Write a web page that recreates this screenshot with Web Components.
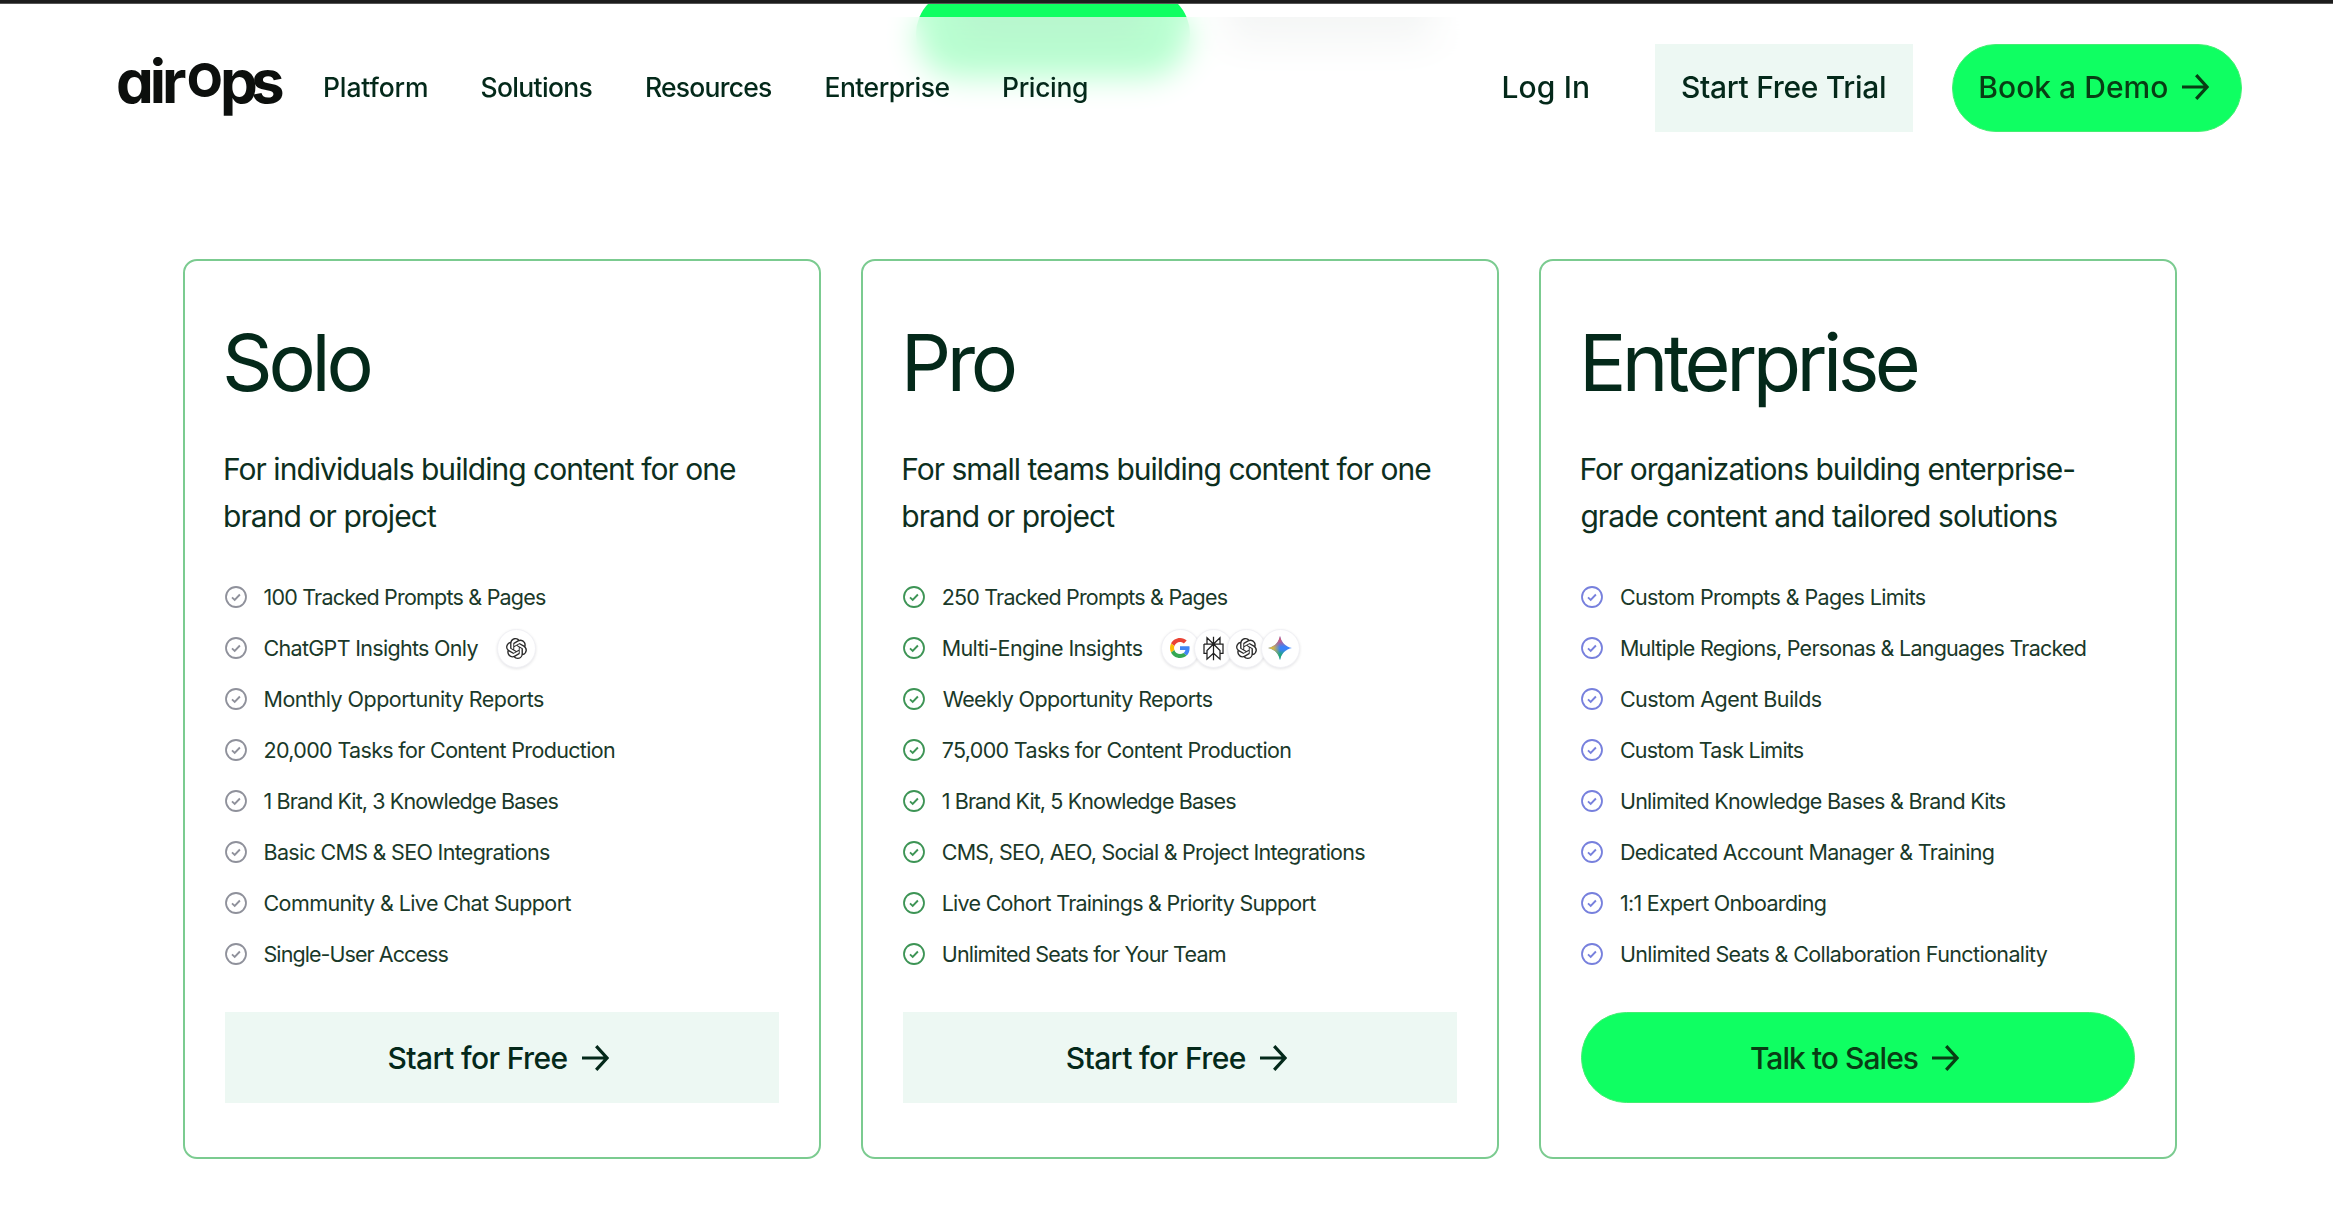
<!DOCTYPE html>
<html lang="en">
<head>
<meta charset="utf-8">
<title>airOps Pricing</title>
<style>
html,body{margin:0;height:1224px;overflow:hidden;background:#fff}
body{font-family:Inter,"Liberation Sans",sans-serif;color:#04291a}
</style>
</head>
<body>
<pricing-page></pricing-page>
<script>
const define=(name,html,init)=>customElements.define(name,class extends HTMLElement{
  constructor(){super();this.attachShadow({mode:'open'})}
  connectedCallback(){
    if(this.ready)return;this.ready=true;
    this.shadowRoot.innerHTML=typeof html==='function'?html(this):html;
    if(init)init(this);
  }
});
const ctx=document.createElement('canvas').getContext('2d');

/* Text set to a fixed ink width through its letter spacing. */
define('fit-text','<style>:host{display:block;white-space:nowrap;flex:none}span{display:inline-block;text-indent:0}</style><span><slot></slot></span>',el=>{
  const w=+el.getAttribute('w'),t=el.textContent,cs=getComputedStyle(el);
  ctx.font=`${cs.fontWeight} ${cs.fontSize} ${cs.fontFamily}`;
  const m=ctx.measureText(t),lsb=-m.actualBoundingBoxLeft,rsb=m.width-m.actualBoundingBoxRight;
  const span=el.shadowRoot.querySelector('span');
  const adv=span.getBoundingClientRect().width;
  if(t.length>1)span.style.letterSpacing=((w-(adv-lsb-rsb))/(t.length-1)).toFixed(3)+'px';
  span.style.marginLeft=(-lsb).toFixed(2)+'px';
  el.style.width=w+'px';
});

define('arrow-icon',`<style>:host{display:block;flex:none;width:27px;height:26px}svg{display:block}</style>
<svg width="27" height="26" viewBox="0 0 27 26" fill="none" stroke="currentColor" stroke-width="3.2"><path d="M0 13H25M14.2 1.2L25 13L14.2 24.8"/></svg>`);

define('check-icon',`<style>:host{display:block;flex:none;width:22px;height:22px}svg{display:block}</style>
<svg width="22" height="22" viewBox="0 0 22 22" fill="none" stroke="currentColor" stroke-width="1.8"><circle cx="11" cy="11" r="10"/><path d="M7 11.4l2.7 2.5 5.2-5.4" stroke-width="1.9"/></svg>`);

const glyphs={
openai:`<svg width="21" height="21" viewBox="0 0 24 24" fill="#2b2b2b"><path d="M22.2819 9.8211a5.9847 5.9847 0 0 0-.5157-4.9108 6.0462 6.0462 0 0 0-6.5098-2.9A6.0651 6.0651 0 0 0 4.9807 4.1818a5.9847 5.9847 0 0 0-3.9977 2.9 6.0462 6.0462 0 0 0 .7427 7.0966 5.98 5.98 0 0 0 .511 4.9107 6.051 6.051 0 0 0 6.5146 2.9001A5.9847 5.9847 0 0 0 13.2599 24a6.0557 6.0557 0 0 0 5.7718-4.2058 5.9894 5.9894 0 0 0 3.9977-2.9001 6.0557 6.0557 0 0 0-.7475-7.073zm-9.022 12.6081a4.4755 4.4755 0 0 1-2.8764-1.0408l.1419-.0804 4.7783-2.7582a.7948.7948 0 0 0 .3927-.6813v-6.7369l2.02 1.1686a.071.071 0 0 1 .038.052v5.5826a4.504 4.504 0 0 1-4.4945 4.4944zm-9.6607-4.1254a4.4708 4.4708 0 0 1-.5346-3.0137l.142.0852 4.783 2.7582a.7712.7712 0 0 0 .7806 0l5.8428-3.3685v2.3324a.0804.0804 0 0 1-.0332.0615L9.74 19.9502a4.4992 4.4992 0 0 1-6.1408-1.6464zM2.3408 7.8956a4.485 4.485 0 0 1 2.3655-1.9728V11.6a.7664.7664 0 0 0 .3879.6765l5.8144 3.3543-2.0201 1.1685a.0757.0757 0 0 1-.071 0l-4.8303-2.7865A4.504 4.504 0 0 1 2.3408 7.872zm16.5963 3.8558L13.1038 8.364 15.1192 7.2a.0757.0757 0 0 1 .071 0l4.8303 2.7913a4.4944 4.4944 0 0 1-.6765 8.1042v-5.6772a.79.79 0 0 0-.407-.667zm2.0107-3.0231l-.142-.0852-4.7735-2.7818a.7759.7759 0 0 0-.7854 0L9.409 9.2297V6.8974a.0662.0662 0 0 1 .0284-.0615l4.8303-2.7866a4.4992 4.4992 0 0 1 6.6802 4.66zM8.3065 12.863l-2.02-1.1638a.0804.0804 0 0 1-.038-.0567V6.0742a4.4992 4.4992 0 0 1 7.3757-3.4537l-.142.0805L8.704 5.459a.7948.7948 0 0 0-.3927.6813zm1.0976-2.3654l2.602-1.4998 2.6069 1.4998v2.9994l-2.5974 1.4997-2.6067-1.4997Z"/></svg>`,
google:`<svg width="20" height="20" viewBox="0 0 48 48"><path fill="#EA4335" d="M24 9.5c3.54 0 6.71 1.22 9.21 3.6l6.85-6.85C35.9 2.38 30.47 0 24 0 14.62 0 6.51 5.38 2.56 13.22l7.98 6.19C12.43 13.72 17.74 9.5 24 9.5z"/><path fill="#4285F4" d="M46.98 24.55c0-1.57-.15-3.09-.38-4.55H24v9.02h12.94c-.58 2.96-2.26 5.48-4.78 7.18l7.73 6c4.51-4.18 7.09-10.36 7.09-17.65z"/><path fill="#FBBC05" d="M10.53 28.59c-.48-1.45-.76-2.99-.76-4.59s.27-3.14.76-4.59l-7.98-6.19C.92 16.46 0 20.12 0 24c0 3.88.92 7.54 2.56 10.78l7.97-6.19z"/><path fill="#34A853" d="M24 48c6.48 0 11.93-2.13 15.89-5.81l-7.73-6c-2.15 1.45-4.92 2.3-8.16 2.3-6.26 0-11.57-4.22-13.47-9.91l-7.98 6.19C6.51 42.62 14.62 48 24 48z"/></svg>`,
perplexity:`<svg width="21" height="25" viewBox="0 0 21 25" fill="none" stroke="#202020" stroke-width="1.25"><path d="M10.5 0.8V24.2M10.5 8L4 1.8V8M10.5 8L17 1.8V8M1 8H20V17.3H17M1 8V17.3H4M10.5 8L4 14.6V23.2L10.5 17.3M10.5 8L17 14.6V23.2L10.5 17.3"/></svg>`,
gemini:`<svg width="24" height="24" viewBox="0 0 24 24"><defs><linearGradient id="r" x1="12" y1="0" x2="12.6" y2="11" gradientUnits="userSpaceOnUse"><stop stop-color="#f0434f"/><stop offset=".45" stop-color="#d0597f" stop-opacity=".9"/><stop offset="1" stop-color="#d0597f" stop-opacity="0"/></linearGradient><linearGradient id="y" x1="0" y1="12" x2="12" y2="12.5" gradientUnits="userSpaceOnUse"><stop stop-color="#f8c41c"/><stop offset=".5" stop-color="#e0b93c" stop-opacity=".85"/><stop offset="1" stop-color="#e0b93c" stop-opacity="0"/></linearGradient><linearGradient id="g" x1="10.5" y1="24" x2="12" y2="13" gradientUnits="userSpaceOnUse"><stop stop-color="#12b35b"/><stop offset=".5" stop-color="#1faa70" stop-opacity=".9"/><stop offset="1" stop-color="#1faa70" stop-opacity="0"/></linearGradient></defs>${['#3a82f9','url(#g)','url(#y)','url(#r)'].map(f=>`<path fill="${f}" d="M12 0C13.2 6.4 17.6 10.8 24 12C17.6 13.2 13.2 17.6 12 24C10.8 17.6 6.4 13.2 0 12C6.4 10.8 10.8 6.4 12 0Z"/>`).join('')}</svg>`};
define('engine-badge',el=>`<style>:host{display:flex;box-sizing:border-box;flex:none;width:39px;height:39px;border-radius:50%;background:#fff;border:1px solid #f1f1f5;box-shadow:0 1px 3px #00001a1c;align-items:center;justify-content:center}svg{display:block}</style>${glyphs[el.getAttribute('name')]}`);

define('site-logo',`<style>:host{display:flex;align-items:baseline;width:166px;height:60px;line-height:60px;color:#0c0f0d;font-weight:700;flex:none;font-feature-settings:"cv11";margin-bottom:13px}
fit-text{font-size:60px}.o{font-size:46px;font-weight:800;margin:0 2px 0 2px;position:relative;top:-6px}</style>
<fit-text w="69">air</fit-text><fit-text class="o" w="33">O</fit-text><fit-text w="60">ps</fit-text>`);

define('cta-button',`<style>:host{box-sizing:border-box;display:flex;align-items:center;justify-content:center;gap:14.5px;height:91px;background:#edf8f3;font-size:30px;font-weight:500;line-height:40px;flex:none;padding-right:6px;color:#04291a}
:host([kind=green]){background:#0fff62;border-radius:46px;border:1.5px solid #45ee72;color:#083d14}
:host([small]){height:88px;font-size:30px;padding:0 1px 1px 0}
:host([small][kind=green]){padding-right:5px}</style><slot></slot>`);

define('site-header',`<style>
:host{box-sizing:border-box;display:flex;align-items:center;position:absolute;left:0;top:17px;width:2333px;height:141px;padding:0 91px 0 117px;background:#ffffffb5;backdrop-filter:blur(15px)}
nav{display:flex;gap:54.5px;margin-left:42px;font-size:26.5px;font-weight:500;line-height:40px;padding-bottom:1px}
.r{display:flex;align-items:center;margin-left:auto;font-size:30px;font-weight:500;line-height:40px}
.l{padding-bottom:2px}
.t{width:258px;margin:0 39px 0 67px}.d{width:290px}
</style>
<site-logo></site-logo>
<nav><fit-text w="102">Platform</fit-text><fit-text w="111">Solutions</fit-text><fit-text w="125">Resources</fit-text><fit-text w="123">Enterprise</fit-text><fit-text w="83">Pricing</fit-text></nav>
<div class="r"><fit-text class="l" w="84.5">Log In</fit-text><cta-button small class="t"><fit-text w="203">Start Free Trial</fit-text></cta-button><cta-button small kind="green" class="d"><fit-text w="187">Book a Demo</fit-text><arrow-icon></arrow-icon></cta-button></div>`);

/* Plan switch that has scrolled under the header. */
define('plan-switch',`<style>:host{position:absolute;left:916px;top:-10px;height:88px;display:flex;align-items:flex-start}
.on{width:274px;height:88px;border-radius:44px;background:#0fff62;display:flex;align-items:flex-start;justify-content:center}
i,.off{margin-top:27px;height:44px;background:linear-gradient(#04291a26,#04291a1c 50%,transparent);-webkit-mask:linear-gradient(90deg,transparent,#000 18%,#000 82%,transparent)}
i{width:230px}.off{width:256px;margin-left:12px}</style><div class="on"><i></i></div><div class="off"></div>`);

define('plan-feature',el=>`<style>:host{display:flex;align-items:center;height:51px;font-size:21.5px;line-height:30px;color:#1a3929}
check-icon{color:var(--tick);margin-right:17.5px}
.b{display:flex;margin-left:18px}engine-badge+engine-badge{margin-left:-5.7px}</style>
<check-icon></check-icon><fit-text w="${el.getAttribute('w')}">${el.textContent.replace(/&/g,'&amp;')}</fit-text>
<div class="b">${(el.getAttribute('engines')||'').split(' ').filter(Boolean).map(n=>`<engine-badge name="${n}"></engine-badge>`).join('')}</div>`);

define('plan-card',`<style>
:host{box-sizing:border-box;display:flex;flex-direction:column;width:638.5px;height:900px;border:2px solid #7bcb90;border-radius:14px;padding:61px 40px 0;background:#fff}
.h{font-size:79px;line-height:80px;height:80px;padding-left:var(--title-inset)}
.d{font-size:30px;line-height:46.6px;margin:44.4px 0 32.2px;padding-left:.5px;color:#0d2f1e}
.f{display:flex;flex-direction:column;padding-left:.5px;margin-bottom:32.6px}
</style><div class="h"><slot name="title"></slot></div><div class="d"><slot name="text"></slot></div><div class="f"><slot></slot></div><slot name="cta"></slot>`);

const plans=[
 {t:['Solo',144.5],inset:1.5,tick:'#8f919b',d:[['For individuals building content for one',511],['brand or project',212]],
  f:[['100 Tracked Prompts & Pages',281.5],['ChatGPT Insights Only',214,'openai'],['Monthly Opportunity Reports',279.5],['20,000 Tasks for Content Production',350.5],['1 Brand Kit, 3 Knowledge Bases',294],['Basic CMS & SEO Integrations',285.5],['Community & Live Chat Support',307],['Single-User Access',184]],
  c:['Start for Free',179]},
 {t:['Pro',108],inset:4,tick:'#3d9455',d:[['For small teams building content for one',528],['brand or project',212]],
  f:[['250 Tracked Prompts & Pages',285],['Multi-Engine Insights',200,'google perplexity openai gemini'],['Weekly Opportunity Reports',270],['75,000 Tasks for Content Production',348.5],['1 Brand Kit, 5 Knowledge Bases',293.5],['CMS, SEO, AEO, Social & Project Integrations',422.5],['Live Cohort Trainings & Priority Support',373.5],['Unlimited Seats for Your Team',283]],
  c:['Start for Free',179]},
 {t:['Enterprise',333],inset:4,tick:'#7780dd',d:[['For organizations building enterprise-',493],['grade content and tailored solutions',476]],
  f:[['Custom Prompts & Pages Limits',305],['Multiple Regions, Personas & Languages Tracked',465],['Custom Agent Builds',201],['Custom Task Limits',183],['Unlimited Knowledge Bases & Brand Kits',385],['Dedicated Account Manager & Training',373],['1:1 Expert Onboarding',205],['Unlimited Seats & Collaboration Functionality',427]],
  c:['Talk to Sales',167,'green']}];
const esc=s=>s.replace(/&/g,'&amp;');

define('pricing-page',()=>`<style>
:host{display:block;width:2333px;height:1224px;background:#fff;overflow:hidden;position:relative}
.bar{height:3px;background:#1c1c1c;border-bottom:1px solid #555;position:relative;z-index:1}
.cards{display:flex;gap:39.7px;padding:255px 0 0 182.5px}
[slot=title]{font-size:79px;font-weight:400}
</style>
<div class="bar"></div>
<plan-switch></plan-switch><site-header></site-header>
<div class="cards">${plans.map(p=>`<plan-card style="--tick:${p.tick};--title-inset:${p.inset}px"><fit-text slot="title" w="${p.t[1]}">${p.t[0]}</fit-text>${p.d.map(d=>`<fit-text slot="text" w="${d[1]}">${d[0]}</fit-text>`).join('')}${p.f.map(f=>`<plan-feature w="${f[1]}" engines="${f[2]||''}">${esc(f[0])}</plan-feature>`).join('')}<cta-button slot="cta" kind="${p.c[2]||'light'}"><fit-text w="${p.c[1]}">${p.c[0]}</fit-text><arrow-icon></arrow-icon></cta-button></plan-card>`).join('')}</div>`);
</script>
</body>
</html>
